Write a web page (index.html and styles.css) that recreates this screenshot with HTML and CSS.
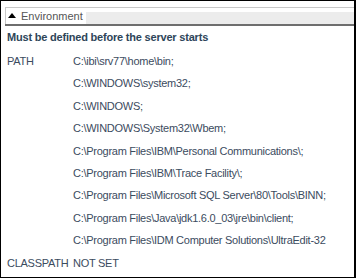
FILE: index.html
```html
<!DOCTYPE html>
<html lang="en">
<head>
    <meta charset="UTF-8">
    <title>Environment</title>
    <link rel="stylesheet" href="styles.css">
</head>
<body>
    <div class="panel">
        <div class="panel-header">
            <div class="tab"><span class="arrow"></span>Environment</div>
            <div class="tab-rest"></div>
        </div>
        <h2>Must be defined before the server starts</h2>
        <div class="vars">
            <div class="var-name">PATH</div>
            <div class="var-values">
                <div class="row">C:\ibi\srv77\home\bin;</div>
                <div class="row">C:\WINDOWS\system32;</div>
                <div class="row">C:\WINDOWS;</div>
                <div class="row">C:\WINDOWS\System32\Wbem;</div>
                <div class="row">C:\Program Files\IBM\Personal Communications\;</div>
                <div class="row">C:\Program Files\IBM\Trace Facility\;</div>
                <div class="row">C:\Program Files\Microsoft SQL Server\80\Tools\BINN;</div>
                <div class="row">C:\Program Files\Java\jdk1.6.0_03\jre\bin\client;</div>
                <div class="row">C:\Program Files\IDM Computer Solutions\UltraEdit-32</div>
            </div>
            <div class="var-name">CLASSPATH</div>
            <div class="var-values">
                <div class="row">NOT SET</div>
            </div>
        </div>
    </div>
</body>
</html>
```

FILE: styles.css
```css
body {
    margin: 0;
    background: #fff;
    font-family: 'Liberation Sans', sans-serif;
}

.panel {
    width: 353px;
    height: 276px;
    border: 1px solid #000;
    border-right-width: 2px;
    overflow: hidden;
}

.panel-header {
    display: flex;
    margin-top: 6px;
    margin-left: 4px;
    height: 16px;
    border-top: 1px solid #c8c8c8;
    border-bottom: 2px solid #6e6e6e;
}

.tab {
    display: flex;
    align-items: center;
    gap: 5px;
    padding: 0 3px 0 2px;
    border-left: 1px solid #c8c8c8;
    font-size: 11px;
    color: #555;
    background: #fff;
}

.arrow {
    width: 0;
    height: 0;
    border-left: 4px solid transparent;
    border-right: 4px solid transparent;
    border-bottom: 5px solid #000;
    margin-top: -1px;
}

.tab-rest {
    flex: 1;
    margin-top: 4px;
    background: #ececec;
}

h2 {
    margin: 5px 0 0 6px;
    font-size: 11px;
    font-weight: bold;
    letter-spacing: -0.2px;
    color: #2e4559;
}

.vars {
    display: grid;
    grid-template-columns: 66px 1fr;
    margin: 12px 0 0 6px;
    font-size: 11px;
    letter-spacing: -0.27px;
    color: #3b4b5e;
}

.var-name,
.row {
    height: 22.4px;
    line-height: 13px;
}
```
